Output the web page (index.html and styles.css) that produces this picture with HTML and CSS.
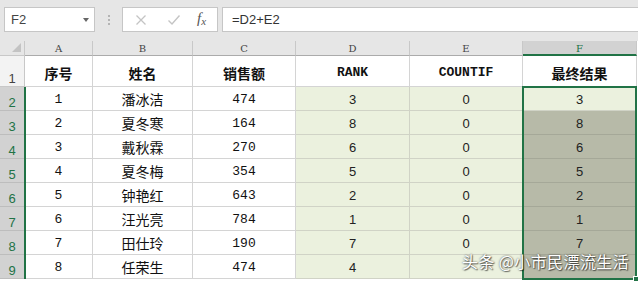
FILE: index.html
```html
<!DOCTYPE html>
<html lang="zh">
<head>
<meta charset="utf-8">
<link rel="stylesheet" href="styles.css">
</head>
<body>
<div class="app">
  <div class="fbar">
    <div class="namebox"><span class="nb-text">F2</span><span class="nb-arrow"></span></div>
    <div class="dots"><i></i><i></i><i></i></div>
    <div class="btns">
      <svg class="ic" width="12" height="12" viewBox="0 0 12 12"><path d="M1.5 1.5 L10.5 10.5 M10.5 1.5 L1.5 10.5" stroke="#c4c4c4" stroke-width="1.3" fill="none"/></svg>
      <svg class="ic" width="14" height="12" viewBox="0 0 14 12"><path d="M1.5 6.5 L5 10 L12.5 1.5" stroke="#c4c4c4" stroke-width="1.4" fill="none"/></svg>
      <span class="fx">f<sub>x</sub></span>
    </div>
    <div class="finput">=D2+E2</div>
  </div>
  <div class="sheet">
    <div class="corner"><span class="tri"></span></div>
    <div class="ch">A</div><div class="ch">B</div><div class="ch">C</div><div class="ch">D</div><div class="ch">E</div><div class="ch ch-sel">F</div>

    <div class="rh rh1">1</div>
    <div class="c hd">序号</div><div class="c hd">姓名</div><div class="c hd">销售额</div><div class="c hd mono">RANK</div><div class="c hd mono">COUNTIF</div><div class="c hd">最终结果</div>

    <div class="rh sel">2</div><div class="c num">1</div><div class="c cn">潘冰洁</div><div class="c num">474</div><div class="c g">3</div><div class="c g">0</div><div class="c g">3</div>
    <div class="rh sel">3</div><div class="c num">2</div><div class="c cn">夏冬寒</div><div class="c num">164</div><div class="c g">8</div><div class="c g">0</div><div class="c s">8</div>
    <div class="rh sel">4</div><div class="c num">3</div><div class="c cn">戴秋霖</div><div class="c num">270</div><div class="c g">6</div><div class="c g">0</div><div class="c s">6</div>
    <div class="rh sel">5</div><div class="c num">4</div><div class="c cn">夏冬梅</div><div class="c num">354</div><div class="c g">5</div><div class="c g">0</div><div class="c s">5</div>
    <div class="rh sel">6</div><div class="c num">5</div><div class="c cn">钟艳红</div><div class="c num">643</div><div class="c g">2</div><div class="c g">0</div><div class="c s">2</div>
    <div class="rh sel">7</div><div class="c num">6</div><div class="c cn">汪光亮</div><div class="c num">784</div><div class="c g">1</div><div class="c g">0</div><div class="c s">1</div>
    <div class="rh sel">8</div><div class="c num">7</div><div class="c cn">田仕玲</div><div class="c num">190</div><div class="c g">7</div><div class="c g">0</div><div class="c s">7</div>
    <div class="rh sel">9</div><div class="c num">8</div><div class="c cn">任荣生</div><div class="c num">474</div><div class="c g">4</div><div class="c g"></div><div class="c s"></div>

    <div class="rowsel-line"></div>
    <div class="selbox"><span class="handle"></span></div>
    <div class="wm">头条 @小市民漂流生活</div>
  </div>
</div>
</body>
</html>
```
FILE: styles.css
```css
* { box-sizing: border-box; }
html, body { margin: 0; padding: 0; }
body { width: 638px; height: 282px; overflow: hidden; background: #ffffff; font-family: "Liberation Sans", Arial, sans-serif; }
.app { width: 638px; height: 282px; overflow: hidden; }

.fbar { height: 41px; background: #e6e6e6; display: flex; align-items: flex-start; padding-top: 7px; padding-left: 4px; }
.namebox { width: 91px; height: 25px; background: #fff; border: 1px solid #c6c6c6; display: flex; align-items: center; justify-content: space-between; padding: 0 5px 0 6px; }
.nb-text { font-size: 13px; color: #444; }
.nb-arrow { width: 0; height: 0; border-left: 3.5px solid transparent; border-right: 3.5px solid transparent; border-top: 4px solid #666; }
.dots { width: 27px; height: 25px; display: flex; flex-direction: column; align-items: center; justify-content: center; gap: 2px; }
.dots i { display: block; width: 2px; height: 2px; background: #b4b4b4; }
.btns { width: 96px; height: 25px; background: #fff; border: 1px solid #c6c6c6; display: flex; align-items: center; padding-left: 12px; gap: 0; }
.btns .ic:first-child { margin-right: 20px; }
.btns .ic:nth-child(2) { margin-right: 16px; }
.fx { font-family: "Liberation Serif", serif; font-style: italic; font-size: 15px; color: #555; line-height: 1; margin-top: -2px; }
.fx sub { font-size: 11px; vertical-align: -2px; }
.finput { flex: 1; height: 25px; margin-left: 4px; background: #fff; border: 1px solid #c6c6c6; border-right: none; font-size: 13px; color: #333; padding-left: 9px; line-height: 23px; }

.sheet { position: relative; display: grid; grid-template-columns: 25px 68px 100px 103px 114px 113px 114px; grid-template-rows: 15px 31px repeat(8, 24px); background: #fff; }

.corner { background: #e6e6e6; border-right: 1px solid #c8c8c8; border-bottom: 1px solid #c8c8c8; position: relative; }
.tri { position: absolute; right: 3px; bottom: 3px; width: 0; height: 0; border-left: 9px solid transparent; border-bottom: 9px solid #c3c3c3; }
.ch { background: #e6e6e6; border-right: 1px solid #c8c8c8; border-bottom: 1px solid #ababab; font-family: "DejaVu Serif", "Liberation Serif", serif; font-size: 10px; color: #444; text-align: center; line-height: 15px; }
.ch-sel { background: #d2d2d2; color: #217346; border-bottom: 2px solid #217346; }

.rh { background: #e6e6e6; border-right: 1px solid #c8c8c8; border-bottom: 1px solid #c8c8c8; font-size: 13px; color: #444; display: flex; align-items: flex-end; justify-content: center; padding-bottom: 1px; line-height: 1; }
.rh1 { background: #f3f3f3; }
.rh.sel { background: #d2d2d2; color: #217346; border-bottom-color: #bdbdbd; }

.c { border-right: 1px solid #d4d4d4; border-bottom: 1px solid #d4d4d4; display: flex; align-items: center; justify-content: center; color: #111; font-size: 13px; padding-top: 1px; }
.hd { font-family: "Noto Sans CJK SC", sans-serif; font-weight: 700; font-size: 14px; padding-top: 3px; }
.hd.mono { font-family: "Liberation Mono", "DejaVu Sans Mono", monospace; font-size: 13px; }
.num { font-family: "Liberation Mono", "DejaVu Sans Mono", monospace; font-size: 13px; }
.cn { font-family: "Noto Sans CJK SC", sans-serif; font-size: 14px; }
.g { background: #ebf1de; font-family: "Liberation Sans", Arial, sans-serif; color: #222; border-bottom-color: #d0d3c6; border-right-color: #d0d3c6; }
.s { background: #b7baa8; font-family: "Liberation Sans", Arial, sans-serif; color: #222; border-bottom-color: #a5a898; }

.rowsel-line { position: absolute; left: 24px; top: 46px; width: 2px; height: 192px; background: #217346; }
.selbox { position: absolute; left: 522px; top: 45px; width: 115px; height: 194px; border: 2px solid #217346; }
.handle { position: absolute; right: -4px; bottom: -4px; width: 6px; height: 6px; background: #217346; border: 1px solid #fff; }

.wm { position: absolute; left: 462px; top: 208px; font-family: "Noto Sans CJK SC", sans-serif; font-size: 16px; color: #fff; letter-spacing: 0.4px; text-shadow: 0 0 2px rgba(0,0,0,0.7), 1px 1px 1px rgba(0,0,0,0.5); white-space: nowrap; }
```
